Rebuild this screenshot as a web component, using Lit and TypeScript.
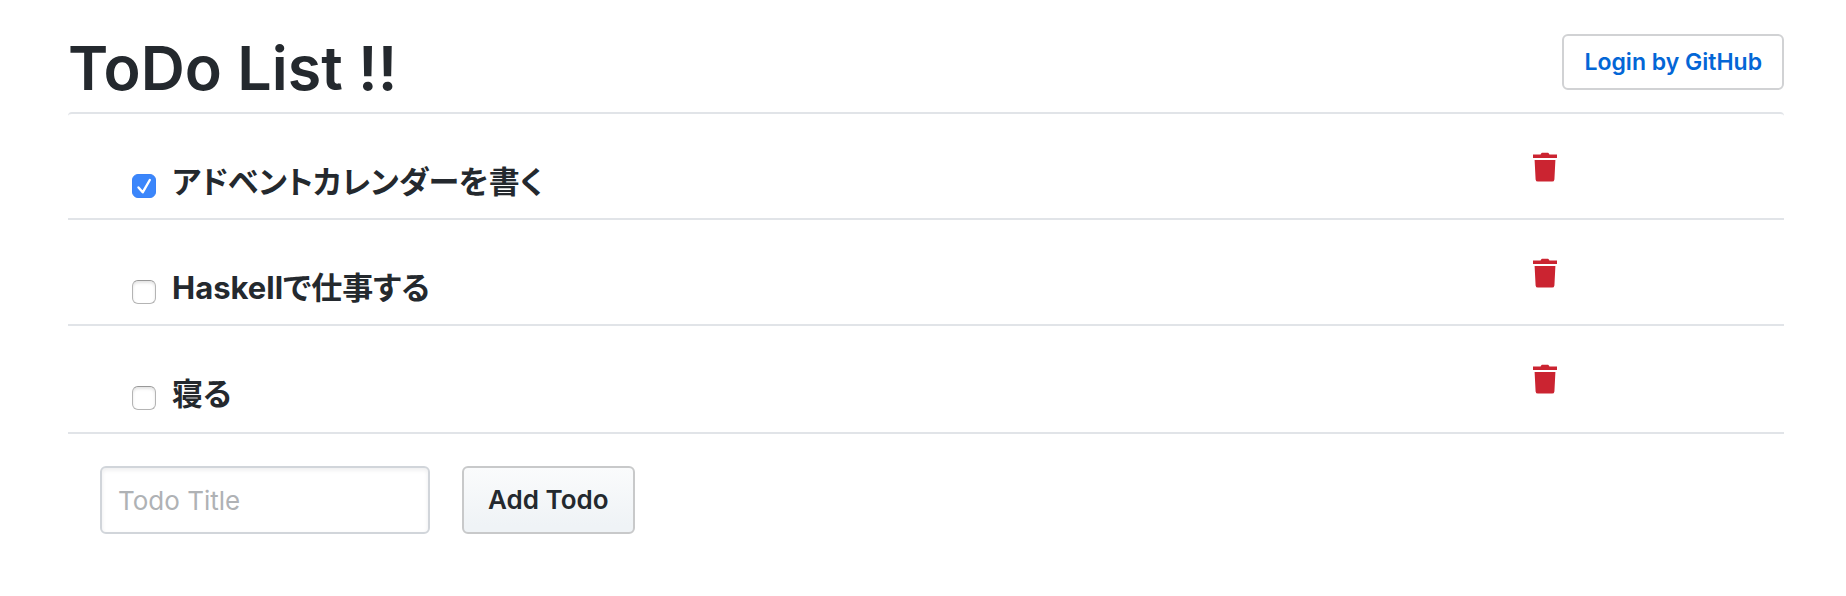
import { LitElement, html, css } from "lit";
import { customElement, state } from "lit/decorators.js";
import { repeat } from "lit/directives/repeat.js";

interface Todo {
  id: number;
  title: string;
  done: boolean;
}

@customElement("app-root")
export class AppRoot extends LitElement {
  static styles = css`
    :host {
      display: block;
      box-sizing: border-box;
      padding: 24px 62px 0 68px;
      background: #fff;
      color: #24292e;
      font-family: Inter, "Noto Sans CJK JP", sans-serif;
    }
    *,
    *::before,
    *::after {
      box-sizing: border-box;
    }
    .header {
      display: flex;
      justify-content: space-between;
      align-items: flex-start;
    }
    .title {
      margin: 0;
      font-size: 61px;
      font-weight: 600;
      line-height: 88px;
    }
    .login {
      margin: 10px 0 0;
      padding: 0 20px;
      height: 56px;
      border: 2px solid #d1d2d4;
      border-radius: 6px;
      background: #fff;
      color: #0366d6;
      font: inherit;
      font-size: 23px;
      font-weight: 600;
      line-height: 52px;
      cursor: pointer;
    }
    .list {
      list-style: none;
      margin: 0;
      padding: 0 0 2px;
      border-top: 2px solid #e1e4e8;
      border-bottom: 2px solid #e1e4e8;
      border-radius: 4px 4px 0 0;
    }
    .row {
      display: grid;
      grid-template-columns: 5fr 1fr;
      align-items: start;
    }
    .row + .row {
      border-top: 2px solid #e1e4e8;
    }
    .item {
      display: flex;
      align-items: center;
      gap: 16px;
      padding: 48px 16px 16px 64px;
      font-size: 31px;
      font-weight: 600;
      line-height: 40px;
      font-feature-settings: "palt";
    }
    .name {
      font-weight: 700;
    }
    .check {
      appearance: none;
      flex: none;
      width: 24px;
      height: 24px;
      margin: 8px 0 0;
      border: 1px solid #b4b4b4;
      border-top-color: #989898;
      border-radius: 6px;
      background: #fff;
      box-shadow: inset 0 2px 3px #e4e4e4;
    }
    .check:checked {
      border-color: #3a82f7;
      box-shadow: none;
      background: #3b86fb
        url("data:image/svg+xml,%3Csvg xmlns='http://www.w3.org/2000/svg' viewBox='0 0 22 22'%3E%3Cpath d='M5.5 12.5l4.2 4.8L16.8 5' fill='none' stroke='white' stroke-width='2.4' stroke-linecap='round' stroke-linejoin='round'/%3E%3C/svg%3E")
        center / 22px 22px no-repeat;
    }
    .delete {
      justify-self: start;
      display: block;
      margin: 36px 0 0 32px;
      padding: 2px;
      border: 0;
      background: none;
      color: #cb2431;
      cursor: pointer;
    }
    .trash {
      display: block;
      width: 26px;
      height: 30px;
      fill: currentColor;
    }
    .form {
      display: flex;
      gap: 32px;
      padding: 32px;
    }
    .field,
    .add {
      height: 68px;
      font: inherit;
      font-size: 26px;
      line-height: 40px;
    }
    .field {
      width: 330px;
      padding: 0 16px;
      border: 2px solid #d1d5da;
      border-radius: 6px;
      background: #fff;
      color: #24292e;
      box-shadow: inset 0 2px 4px rgba(27, 31, 35, 0.08);
    }
    .field::placeholder {
      color: #afb2b5;
      opacity: 1;
    }
    .add {
      padding: 0 24px;
      border: 2px solid #c8c9ca;
      border-radius: 6px;
      background: linear-gradient(#fafbfc, #eff3f6 90%);
      color: #24292e;
      font-weight: 600;
      cursor: pointer;
    }
  `;

  @state() private todos: Todo[] = [
    { id: 1, title: "アドベントカレンダーを書く", done: true },
    { id: 2, title: "Haskellで仕事する", done: false },
    { id: 3, title: "寝る", done: false },
  ];

  private toggle(id: number) {
    this.todos = this.todos.map((t) => (t.id === id ? { ...t, done: !t.done } : t));
  }

  private remove(id: number) {
    this.todos = this.todos.filter((t) => t.id !== id);
  }

  private add(event: Event) {
    event.preventDefault();
    const field = this.renderRoot.querySelector<HTMLInputElement>(".field")!;
    const title = field.value.trim();
    if (!title) return;
    const id = Math.max(0, ...this.todos.map((t) => t.id)) + 1;
    this.todos = [...this.todos, { id, title, done: false }];
    field.value = "";
  }

  private renderTodo(todo: Todo) {
    return html`
      <li class="row">
        <label class="item">
          <input
            class="check"
            type="checkbox"
            .checked=${todo.done}
            @change=${() => this.toggle(todo.id)}
          />
          <span class="name" lang="ja">${todo.title}</span>
        </label>
        <button class="delete" type="button" aria-label="Delete" @click=${() => this.remove(todo.id)}>
          <svg class="trash" viewBox="0 0 26 30" aria-hidden="true">
            <path d="M1 2.4h7.6c.4-1 1-1.6 2-1.6h4.8c1 0 1.6.6 2 1.6H25v3.6H1z" />
            <path d="M2.6 8h20.8l-1 19.4a2.4 2.4 0 0 1-2.4 2.2H6a2.4 2.4 0 0 1-2.4-2.2z" />
          </svg>
        </button>
      </li>
    `;
  }

  render() {
    return html`
      <header class="header">
        <h1 class="title">ToDo List !!</h1>
        <button class="login" type="button">Login by GitHub</button>
      </header>
      <main>
        <ul class="list">
          ${repeat(this.todos, (t) => t.id, (t) => this.renderTodo(t))}
        </ul>
        <form class="form" @submit=${this.add}>
          <input class="field" type="text" placeholder="Todo Title" aria-label="Todo Title" />
          <button class="add" type="submit">Add Todo</button>
        </form>
      </main>
    `;
  }
}
